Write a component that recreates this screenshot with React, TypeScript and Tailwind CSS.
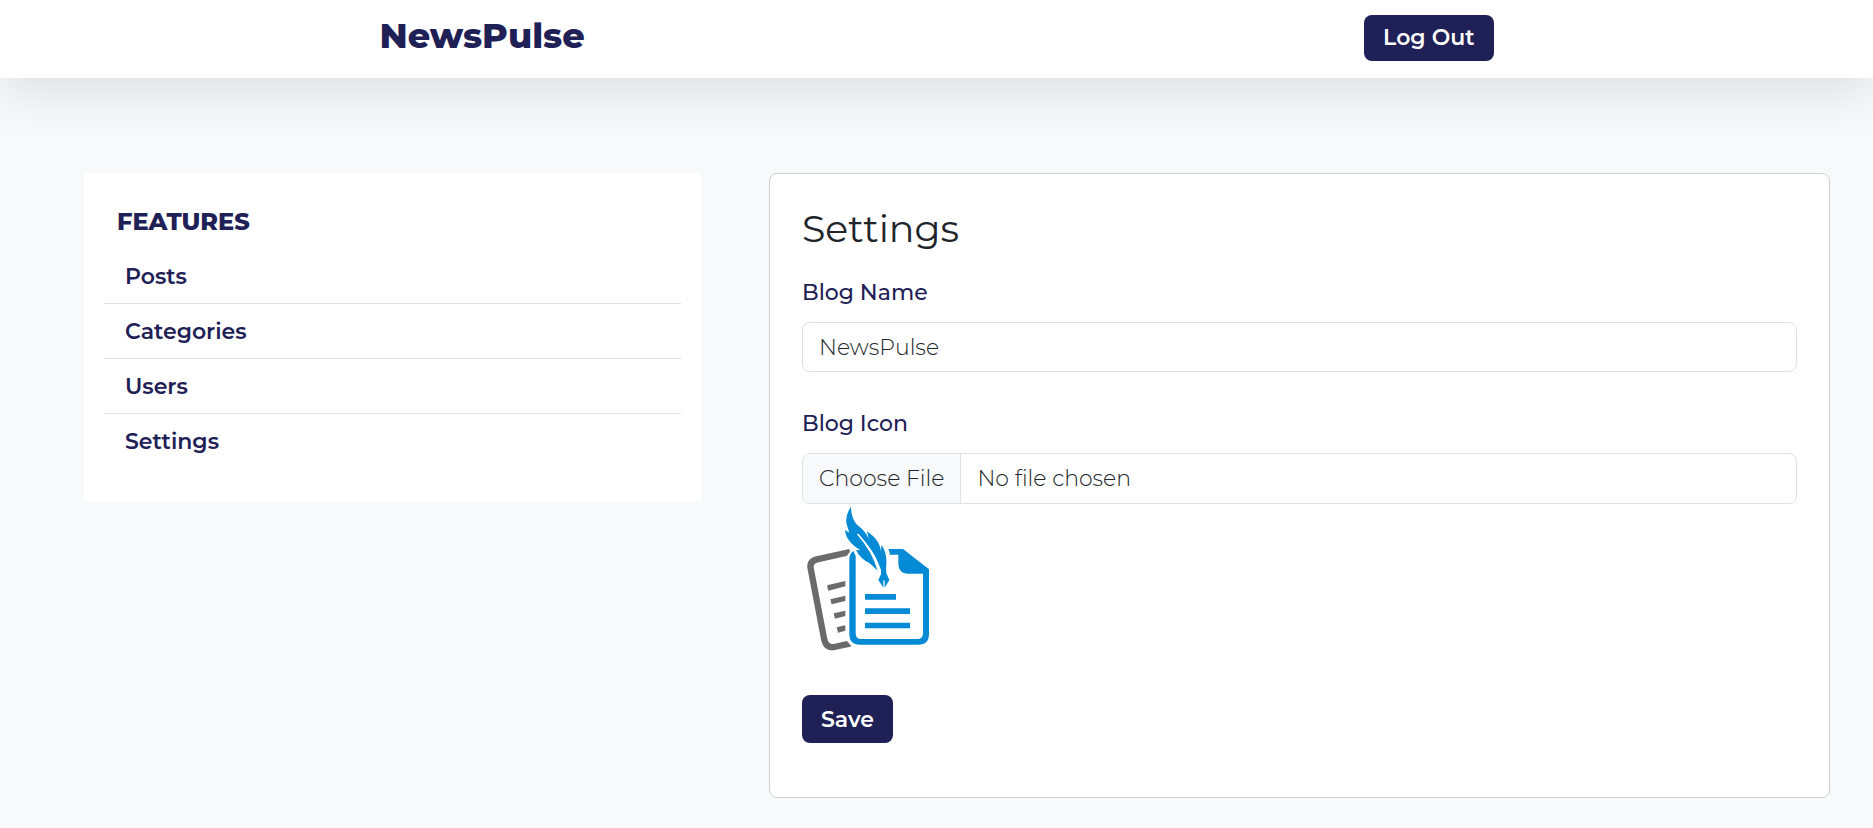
const features = ['Posts', 'Categories', 'Users', 'Settings'];

function BlogIcon() {
  return (
    <svg viewBox="36 12 450 450" className="block size-[150px]" role="img" aria-label="Blog icon">
      <path
        d="M180 156 L81 178 Q58 184 62 205 L103 420 Q109 445 133 441 L182 430"
        fill="none"
        stroke="#6b6b6b"
        strokeWidth="19"
      />
      <g fill="#6b6b6b">
        <path d="M111 256 L166 243 V259 L115 272 Z" />
        <path d="M121 298 L166 287 V303 L125 313 Z" />
        <path d="M131 340 L166 332 V348 L135 356 Z" />
        <path d="M140 382 L166 376 V392 L144 398 Z" />
      </g>
      <path d="M168 172 L186 146 L232 184 V202 H168 Z" fill="#fff" />
      <path d="M168 190 V420 L184 438 H190 V190 Z" fill="#fff" />
      <path
        d="M190 153 Q178 161 178 180 V402 Q178 434 210 434 H385 Q417 434 417 402 V208 L339 147 H295 Q299 155 299 164 H325 V188 Q325 221 355 221 H399 V399 Q399 417 382 417 H213 Q197 417 197 399 V168 Z"
        fill="#058bd5"
      />
      <path
        d="M183 20 C171 38 165 59 171 76 L178 98 L165 90 C167 110 176 123 194 139 L211 151 L198 150 C207 168 220 181 239 190 L264 213 C258 177 236 142 203 102 C235 132 258 166 273 210 L273 222 L265 240 L280 263 L280 244 Q282 237 284 244 L284 263 L298 240 L289 219 L288 205 C291 182 290 155 274 135 L273 155 C271 133 259 113 231 94 L236 117 C229 99 218 87 202 75 C190 62 183 43 183 20 Z"
        fill="#058bd5"
      />
      <path d="M203 102 C236 139 256 176 266 215" fill="none" stroke="#fff" strokeWidth="5" />
      <path d="M225 282 H318 V299 H225 Z M225 325 H360 V342 H225 Z M225 368 H360 V385 H225 Z" fill="#058bd5" />
    </svg>
  );
}

export default function App() {
  return (
    <div className="min-h-screen bg-[#f8f9fb] pb-[30px] font-[Montserrat,Inter,sans-serif] text-[22px] leading-[33px] text-[#212529]">
      <header className="bg-white px-6 shadow-[0_16px_48px_rgba(0,0,0,0.1)]">
        <div className="mx-auto flex h-[78px] max-w-[1114px] items-start justify-between pt-[15px]">
          <a href="#" className="text-[35px] leading-[42px] font-extrabold text-[#1e2056]">
            NewsPulse
          </a>
          <button type="button" className="h-[46px] rounded-lg bg-[#1e2056] px-[19px] pb-[2px] font-semibold text-white">
            Log Out
          </button>
        </div>
      </header>

      <div className="grid grid-cols-[617fr_1061fr] items-start gap-[68px] pt-[95px] pr-[43px] pl-[84px]">
        <aside className="bg-white px-5 pt-8 pb-[34px] text-[#1e2056]">
          <h2 className="px-[13px] text-2xl leading-[33px] font-extrabold">FEATURES</h2>
          <nav aria-label="Features">
            <ul className="divide-y divide-[#dee2e6] pt-[11px]">
              {features.map((item) => (
                <li key={item}>
                  <a href="#" className="block px-[21px] pt-[11px] pb-[10px] font-semibold">
                    {item}
                  </a>
                </li>
              ))}
            </ul>
          </nav>
        </aside>

        <main className="rounded-lg border border-[#ced0d3] bg-white px-8 pt-8 pb-[54px]">
          <h1 className="text-[38px] leading-[46px]">Settings</h1>
          <form onSubmit={(event) => event.preventDefault()}>
            <label htmlFor="blog-name" className="mt-6 mb-[13px] block font-medium text-[#1e2056]">
              Blog Name
            </label>
            <input
              id="blog-name"
              type="text"
              defaultValue="NewsPulse"
              className="block h-[50px] w-full rounded-lg border border-[#dee0e6] px-4 font-light"
            />
            <label htmlFor="blog-icon" className="mt-[35px] mb-[13px] block font-medium text-[#1e2056]">
              Blog Icon
            </label>
            <input
              id="blog-icon"
              type="file"
              className="block h-[51px] w-full overflow-hidden rounded-lg border border-[#dee2e6] font-light file:mr-4 file:h-[49px] file:border-r file:border-solid file:border-[#dee2e6] file:bg-[#f8f9fb] file:px-4 file:font-light"
            />
            <BlogIcon />
            <button type="submit" className="mt-[41px] block h-12 rounded-lg bg-[#1e2056] px-[19px] font-semibold text-white">
              Save
            </button>
          </form>
        </main>
      </div>
    </div>
  );
}
